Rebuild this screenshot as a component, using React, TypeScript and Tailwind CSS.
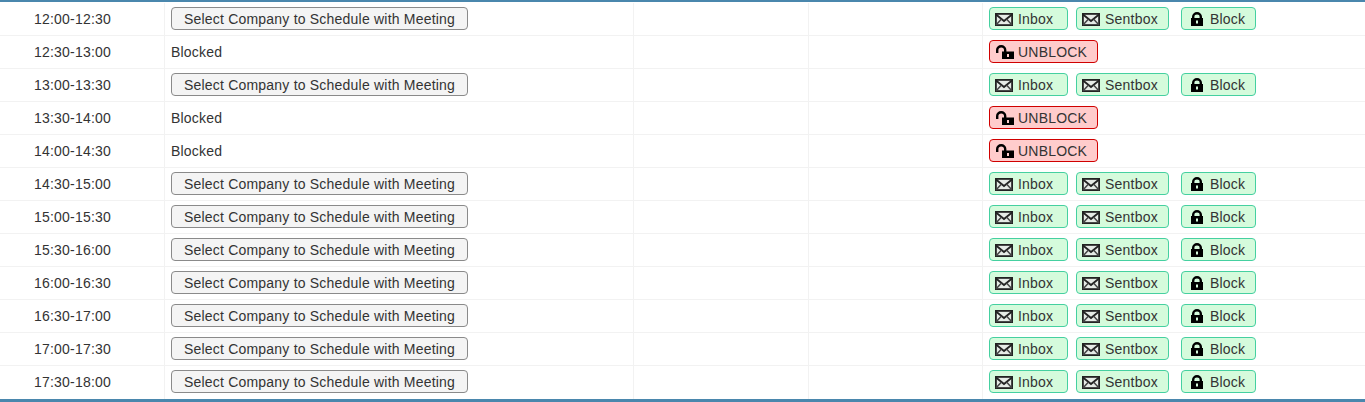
import React from "react";

const MailIcon = () => (
  <svg width="18" height="13" viewBox="0 0 18 13" className="shrink-0">
    <rect x="0.9" y="0.9" width="16.2" height="11.2" fill="#e6ebe6" stroke="#222" strokeWidth="1.8" />
    <path d="M1 1.5 L9 8 L17 1.5" fill="none" stroke="#222" strokeWidth="1.8" />
    <path d="M1 12 L6.5 6 M17 12 L11.5 6" fill="none" stroke="#444" strokeWidth="1.5" />
  </svg>
);

const LockIcon = () => (
  <svg width="12" height="14" viewBox="0 0 12 14" className="shrink-0">
    <path d="M2.2 7 V4.8 a3.8 3.6 0 0 1 7.6 0 V7" fill="none" stroke="#000" strokeWidth="2.4" />
    <path d="M0 6 h12 v8 h-12 z" fill="#000" />
    <rect x="5" y="8.5" width="2" height="3" fill="#d5fbdc" />
  </svg>
);

const UnlockIcon = () => (
  <svg width="18" height="14" viewBox="0 0 18 14" className="shrink-0">
    <path d="M1.2 8 V5 a4 3.7 0 0 1 8 0 V7" fill="none" stroke="#000" strokeWidth="2.4" />
    <path d="M6 6.5 h12 v7.5 h-12 z" fill="#000" />
    <rect x="11" y="9" width="2" height="3" fill="#ffcccc" />
  </svg>
);

const greenBtn = "h-[23px] self-start mt-[4px] pt-[1px] flex items-center rounded-[4px] border border-[#45d0a0] bg-[#d5fbdc] text-[#333]";

const times = [
  ["12:00-12:30", false],
  ["12:30-13:00", true],
  ["13:00-13:30", false],
  ["13:30-14:00", true],
  ["14:00-14:30", true],
  ["14:30-15:00", false],
  ["15:00-15:30", false],
  ["15:30-16:00", false],
  ["16:00-16:30", false],
  ["16:30-17:00", false],
  ["17:00-17:30", false],
  ["17:30-18:00", false],
] as const;

export default function App() {
  return (
    <div className="w-[1365px] h-[402px] overflow-hidden bg-white text-[14px] tracking-[0.21px] text-[#333] font-['Liberation_Sans',Arial,sans-serif]">
      <div className="h-[402px] border-t-2 border-b-[3px] border-[#4a87ad] pt-[1px]">
        {times.map(([time, blocked]) => (
          <div key={time} className="flex h-[33px] border-b border-[#f2f2f2] last:border-b-0">
            <div className="w-[165px] flex items-center justify-center pr-[19px] border-r border-[#f2f2f2]">
              {time}
            </div>
            <div className="w-[469px] flex items-center pl-[6px] border-r border-[#f2f2f2]">
              {blocked ? (
                "Blocked"
              ) : (
                <button className="w-[297px] h-[23px] self-start mt-[4px] pt-[1px] flex items-center justify-center rounded-[4px] border border-[#8a8a8a] bg-[#f4f4f4] text-[#333]">
                  Select Company to Schedule with Meeting
                </button>
              )}
            </div>
            <div className="w-[175px] border-r border-[#f2f2f2]" />
            <div className="w-[174px] border-r border-[#f2f2f2]" />
            <div className="flex-1 flex items-center pl-[6px]">
              {blocked ? (
                <button className="w-[109px] h-[23px] self-start mt-[4px] pt-[1px] flex items-center gap-[4px] pl-[6px] rounded-[4px] border border-[#d00000] bg-[#ffcccc] text-[#333]">
                  <UnlockIcon />
                  UNBLOCK
                </button>
              ) : (
                <>
                  <button className={`${greenBtn} w-[79px] pl-[5px] gap-[5px]`}>
                    <MailIcon />
                    Inbox
                  </button>
                  <button className={`${greenBtn} w-[93px] ml-[8px] pl-[5px] gap-[5px]`}>
                    <MailIcon />
                    Sentbox
                  </button>
                  <button className={`${greenBtn} w-[75px] ml-[12px] pl-[9px] gap-[7px]`}>
                    <LockIcon />
                    Block
                  </button>
                </>
              )}
            </div>
          </div>
        ))}
      </div>
    </div>
  );
}
